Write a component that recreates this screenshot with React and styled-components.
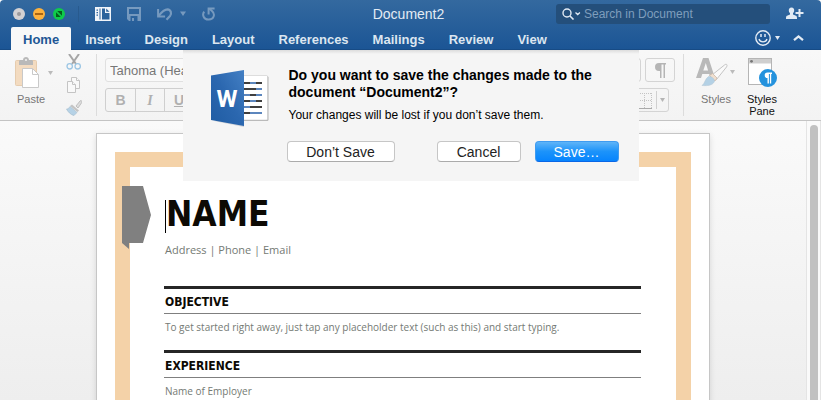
import { useState } from "react";
import styled, { createGlobalStyle, css } from "styled-components";

const tabs = [
  "Home",
  "Insert",
  "Design",
  "Layout",
  "References",
  "Mailings",
  "Review",
  "View",
];

export default function App() {
  const [activeTab, setActiveTab] = useState("Home");
  const [dialogOpen, setDialogOpen] = useState(true);
  const [font, setFont] = useState("Tahoma (Headings)");

  const closeDialog = () => setDialogOpen(false);

  return (
    <Window>
      <GlobalStyle />
      <Header>
        <TitleBar>
          <QuickAccess>
            <Lights>
              <Light $color="#d3d1d3" aria-label="Close">
                <svg width="12" height="12" viewBox="0 0 12 12">
                  <circle cx="6" cy="6" r="2" fill="#9b999b" />
                </svg>
              </Light>
              <Light $color="#fdb13d" aria-label="Minimize">
                <svg width="12" height="12" viewBox="0 0 12 12">
                  <path d="M2 6h8" stroke="#8f4d05" strokeWidth="1.6" />
                </svg>
              </Light>
              <Light $color="#0fcb4b" aria-label="Zoom">
                <svg width="12" height="12" viewBox="0 0 12 12">
                  <path d="M3 4.2v4.8h4.8zM4.2 3h4.8v4.8z" fill="#04601c" />
                </svg>
              </Light>
            </Lights>
            <TitleDivider />
            <BarButton aria-label="Sidebar">
              <SidebarIcon />
            </BarButton>
            <BarButton aria-label="Save" $faded>
              <SaveIcon />
            </BarButton>
            <BarButton aria-label="Undo" $faded>
              <UndoIcon />
            </BarButton>
            <BarButton aria-label="Repeat" $faded>
              <RedoIcon />
            </BarButton>
          </QuickAccess>
          <Title>Document2</Title>
          <TitleTools>
            <Search>
              <SearchIcon />
              <input
                type="text"
                placeholder="Search in Document"
                aria-label="Search in Document"
              />
            </Search>
            <BarButton aria-label="Share">
              <ShareIcon />
            </BarButton>
          </TitleTools>
        </TitleBar>
        <TabBar>
          {tabs.map((tab) => (
            <Tab
              key={tab}
              $active={tab === activeTab}
              onClick={() => setActiveTab(tab)}
            >
              {tab}
            </Tab>
          ))}
          <TabTools>
            <BarButton aria-label="Feedback">
              <SmileyIcon />
            </BarButton>
            <BarButton aria-label="Collapse ribbon">
              <svg width="11" height="8" viewBox="0 0 11 8" fill="none">
                <path d="M1 6.2 5.5 2.4 10 6.2" stroke="#e3ebf4" strokeWidth="2.2" />
              </svg>
            </BarButton>
          </TabTools>
        </TabBar>
      </Header>

      <Ribbon>
        <PasteGroup>
          <BigButton $faded>
            <PasteIcon />
            <PasteLabel>Paste</PasteLabel>
          </BigButton>
          <SmallIcons>
            <IconButton aria-label="Cut">
              <CutIcon />
            </IconButton>
            <IconButton aria-label="Copy">
              <CopyIcon />
            </IconButton>
            <IconButton aria-label="Format painter">
              <BrushIcon />
            </IconButton>
          </SmallIcons>
        </PasteGroup>
        <FontGroup>
          <FontInput
            type="text"
            aria-label="Font"
            value={font}
            onChange={(e) => setFont(e.target.value)}
          />
          <Segments>
            <Segment aria-label="Bold">
              <b>B</b>
            </Segment>
            <Segment aria-label="Italic">
              <i>I</i>
            </Segment>
            <Segment aria-label="Underline">
              <u>U</u>
            </Segment>
          </Segments>
        </FontGroup>
        <ParagraphGroup>
          <ParagraphRow>
            <Tool aria-label="Sort" />
            <Tool aria-label="Show formatting marks">
              <PilcrowIcon />
            </Tool>
          </ParagraphRow>
          <ParagraphRow>
            <Tool aria-label="Borders" $wide>
              <BordersIcon />
            </Tool>
          </ParagraphRow>
        </ParagraphGroup>
        <StylesGroup>
          <BigButton $faded>
            <StylesIcon />
            Styles
          </BigButton>
          <BigButton>
            <StylesPaneIcon />
            Styles
            <br />
            Pane
          </BigButton>
        </StylesGroup>
      </Ribbon>

      <Workspace>
        <Canvas>
          <Page>
            <Frame>
              <Tag>
                <svg width="30" height="64" viewBox="0 0 30 64">
                  <path d="M0 0h21l8 29-8 28H7v6L0 57z" fill="#808080" />
                </svg>
              </Tag>
              <Name>NAME</Name>
              <Contact>Address | Phone | Email</Contact>
              <Section>
                <h2>OBJECTIVE</h2>
                <p>
                  To get started right away, just tap any placeholder text (such
                  as this) and start typing.
                </p>
              </Section>
              <Section>
                <h2>EXPERIENCE</h2>
                <p>Name of Employer</p>
              </Section>
            </Frame>
          </Page>
        </Canvas>
        <ScrollTrack>
          <ScrollThumb />
        </ScrollTrack>
      </Workspace>

      {dialogOpen && (
        <Dialog role="alertdialog" aria-labelledby="save-title">
          <WordIcon />
          <DialogBody>
            <h1 id="save-title">
              Do you want to save the changes made to the document “Document2”?
            </h1>
            <p>Your changes will be lost if you don’t save them.</p>
            <DialogButtons>
              <DialogButton $wide onClick={closeDialog}>
                Don’t Save
              </DialogButton>
              <DialogButton onClick={closeDialog}>Cancel</DialogButton>
              <DialogButton $primary onClick={closeDialog}>
                Save…
              </DialogButton>
            </DialogButtons>
          </DialogBody>
        </Dialog>
      )}
    </Window>
  );
}

// Title bar icons
const SidebarIcon = () => (
  <svg width="16" height="14" viewBox="0 0 16 14">
    <path
      d="M0 0h16v14H0zM4.500 1.500v11H5.500v-11zM7 1.500v11h7.500V6H10V1.500zM11.200 1.500v3.300h3.300zM1.500 2.500v1.200H3V2.500zM1.500 5v1.200H3V5zM1.500 7.500v1.200H3V7.500z"
      fill="#f0f4f9"
      fillRule="evenodd"
    />
  </svg>
);

const SaveIcon = () => (
  <svg width="14" height="14" viewBox="0 0 14 14">
    <path
      d="M0 0h14v14H2l-2-2zM2 2v5h10V2zM3.500 9v5H5v-3h2v3h3.500V9z"
      fill="#fff"
      fillRule="evenodd"
    />
  </svg>
);

const UndoIcon = () => (
  <svg width="29" height="14" viewBox="0 0 29 14" fill="none" stroke="#fff">
    <path d="M1.100 2v7.400h7" strokeWidth="2" />
    <path
      d="M1.500 9C5 4.500 7.500 2.300 10.500 2.300c3.500.2 4.500 4.200 2.500 6.700L9.500 12.800"
      strokeWidth="2.2"
    />
    <path d="M23 4.500h6l-3 4.500z" fill="#fff" stroke="none" />
  </svg>
);

const RedoIcon = () => (
  <svg width="14" height="14" viewBox="0 0 14 14" fill="none" stroke="#fff">
    <path d="M2.200 4.600A5 5 0 0 0 6.500 12.600c5.500.2 7-5.600 3.500-8.600L7.500 1.800" strokeWidth="2" />
    <path d="M6.600 7.500V1.500h6" strokeWidth="2" />
  </svg>
);

const SearchIcon = () => (
  <svg width="19" height="12" viewBox="0 0 19 12" fill="none" stroke="#e3ebf4">
    <circle cx="5" cy="5" r="4" strokeWidth="1.4" />
    <path d="M8 8l3.500 3.500" strokeWidth="1.6" />
    <path d="M13.500 4.500l2.200 2 2.200-2" strokeWidth="1.3" />
  </svg>
);

const ShareIcon = () => (
  <svg width="18" height="13" viewBox="0 0 18 13" fill="#e3ebf4">
    <path d="M5.500.5c2 0 2.800 1.400 2.700 3-.1 1.300-.6 2.100-1.200 2.700v1.300l3 1.200c.8.400 1 1 1 3.300H0c0-2.300.2-2.900 1-3.300l3-1.200V6.200C3.400 5.600 2.900 4.800 2.800 3.500 2.700 1.900 3.500.5 5.500.5z" />
    <path d="M12.500 2h2v3h3v2h-3v3h-2V7h-3V5h3z" />
  </svg>
);

const SmileyIcon = () => (
  <svg width="25" height="16" viewBox="0 0 25 16" fill="none" stroke="#e3ebf4">
    <circle cx="8" cy="8" r="7.2" strokeWidth="1.4" />
    <path d="M6 4v3M10 4v3" strokeWidth="1.5" />
    <path d="M4 9c1 3.700 7 3.700 8 0" strokeWidth="1.3" />
    <path d="M20 6h5l-2.500 4z" fill="#e3ebf4" stroke="none" />
  </svg>
);

// Ribbon icons
const PasteIcon = () => (
  <svg width="40" height="32" viewBox="0 0 40 32">
    <rect x="1.5" y="3.5" width="21" height="25" rx="1" fill="#f3dbc0" stroke="#e6ccae" />
    <path d="M5 8V4.500c0-.8.500-1.500 1.500-1.500H9c0-4 6-4 6 0h2.500c1 0 1.500.7 1.500 1.500V8z" fill="#b9b9b9" />
    <circle cx="12" cy="3" r="1" fill="#f5f5f5" />
    <path d="M8.500 11.500h10l6 6v13h-16z" fill="#fff" stroke="#c9c9c9" />
    <path d="M18.500 11.500v6h6" fill="none" stroke="#c9c9c9" />
    <path d="M34 14h5l-2.500 4z" fill="#bbb" />
  </svg>
);

const CutIcon = () => (
  <svg width="16" height="16" viewBox="0 0 16 16" fill="none">
    <path d="M3 0l7 10M13 0L6 10" stroke="#a6a6a6" strokeWidth="2" />
    <circle cx="3.7" cy="12.3" r="2.7" stroke="#9cc6e4" strokeWidth="1.3" />
    <circle cx="11.7" cy="12.3" r="2.7" stroke="#9cc6e4" strokeWidth="1.3" />
  </svg>
);

const CopyIcon = () => (
  <svg width="16" height="16" viewBox="0 0 16 16" fill="#f9f9f9" stroke="#c4c4c4">
    <path d="M5.500.5h5l3 3v8h-8z" />
    <path d="M10.500.5v3h3" />
    <path d="M1.500 4.500h5l3 3v8h-8z" />
    <path d="M6.500 4.500v3h3" />
  </svg>
);

const BrushIcon = () => (
  <svg width="16" height="16" viewBox="0 0 16 16">
    <path d="M10 6l4-5c1-1 2.500 0 1.800 1.500L12 8z" fill="#ddd" stroke="#b5b5b5" strokeWidth=".8" />
    <path d="M6 4.500l7 6-1.500 1.500-7.500-6z" fill="#c4c4c4" />
    <path d="M4 6.500l7 6L8 15.500C5 15 2 12 .5 9c1.500 0 2.500-.8 3.500-2.500z" fill="#b6d2e6" stroke="#a5bccd" strokeWidth=".6" />
  </svg>
);

const PilcrowIcon = () => (
  <svg width="12" height="15" viewBox="0 0 12 15">
    <path d="M5 0h7v1.500h-1V15H9.500V1.500H7.500V15H6V8H5a4 4 0 0 1 0-8z" fill="#b5b5b5" />
  </svg>
);

const BordersIcon = () => (
  <svg width="30" height="22" viewBox="0 0 30 22" fill="none">
    <path d="M0 4.500h14M0 11.500h14M6.500 4v15M13.500 4v15" stroke="#c4c4c4" strokeDasharray="1 1" />
    <path d="M0 19.500h14" stroke="#aaa" />
    <path d="M18.500 2v18" stroke="#d0d0d0" />
    <path d="M22 9h5l-2.500 4z" fill="#b5b5b5" />
  </svg>
);

const StylesIcon = () => (
  <svg width="40" height="32" viewBox="0 0 40 32">
    <path d="M7 1h5.500L19 21h-4.500l-1.300-4H6.300L5 21H0zM9.800 6L7.300 13.500h4.800z" fill="#b9b9b9" />
    <path d="M16 18L28.500 8c2-1.500 3.300-.3 2 2L20.500 22.500z" fill="#fafafa" stroke="#c4c4c4" />
    <path d="M13.500 18.500l3-2 4.500 4.500-2 3z" fill="#f0dfcf" stroke="#cbb9a8" strokeWidth=".8" />
    <path d="M12.500 19.500c3-.5 6.500 2.500 6 5-2 4-7 4.500-12.500 4 3-2 3-7 6.500-9z" fill="#b4d1e5" stroke="#b0c4d2" strokeWidth=".5" />
    <path d="M34 13h5l-2.500 4z" fill="#bbb" />
  </svg>
);

const StylesPaneIcon = () => (
  <svg width="32" height="32" viewBox="0 0 32 32">
    <rect x="2.5" y="1.5" width="23" height="26" fill="#fff" stroke="#b5b5b5" />
    <path d="M3 2h22v4.500H3z" fill="#cfcfcf" />
    <circle cx="5.5" cy="4.3" r="1.4" fill="#777" />
    <circle cx="22" cy="21" r="9" fill="#2492dd" />
    <path d="M21.500 15.500H26V17h-.8v9.500h-1.300V17h-1v9.500h-1.400v-5.400a2.800 2.800 0 0 1 0-5.600z" fill="#fff" />
  </svg>
);

const WordIcon = () => (
  <WordLogo width="58" height="60" viewBox="0 0 58 60">
    <defs>
      <linearGradient id="cover" x1="0" y1="1" x2="1" y2="0">
        <stop offset="0" stopColor="#1f5ca3" />
        <stop offset=".5" stopColor="#2b67af" />
        <stop offset="1" stopColor="#4480c4" />
      </linearGradient>
    </defs>
    <path d="M3 53l30 6v-5z" fill="#b9bcc4" opacity=".6" />
    <rect x="30.5" y="8" width="27" height="45" rx="1.5" fill="#b4b4b4" />
    <rect x="30" y="7.5" width="26.5" height="44.5" rx="1" fill="#fff" stroke="#c9c9c9" strokeWidth=".6" />
    <g strokeWidth="1.8">
      <path d="M33 15h6M45 15h6M33 21h12M39 27h6M33 33h6M45 33h6M39 39h12M33 45h6" stroke="#3f3f3f" />
      <path d="M39 15h6M45 21h6M33 27h6M45 27h6M39 33h6M33 39h6M39 45h12" stroke="#5c86bd" />
    </g>
    <path d="M0 7.500L33 2v56L0 52z" fill="url(#cover)" />
    <text
      x="16"
      y="39"
      textAnchor="middle"
      fontFamily="Roboto, sans-serif"
      fontSize="24"
      fontWeight="700"
      fill="#fff"
    >
      W
    </text>
  </WordLogo>
);

const GlobalStyle = createGlobalStyle`
  * {
    box-sizing: border-box;
    margin: 0;
    padding: 0;
  }
  body {
    background-color: #fff;
    overflow: hidden;
    font-family: "Liberation Sans", Arial, sans-serif;
  }
  button, input {
    font-family: inherit;
    border: none;
    background: none;
    outline: none;
  }
  svg {
    display: block;
    flex-shrink: 0;
  }
`;

const Window = styled.div`
  position: relative;
  display: flex;
  flex-direction: column;
  height: 100vh;
  overflow: hidden;
  border-radius: 4px 4px 0 0;
`;

const Header = styled.header`
  background: linear-gradient(#34699f, #1b5595);
  border-bottom: 1px solid #174b85;
`;

const TitleBar = styled.div`
  display: grid;
  grid-template-columns: 1fr auto 1fr;
  align-items: center;
  height: 27px;
  padding: 0 17px 0 13px;
`;

const QuickAccess = styled.div`
  display: flex;
  align-items: center;
  gap: 16px;
`;

const Lights = styled.div`
  display: flex;
  gap: 8px;
`;

const Light = styled.button`
  width: 12px;
  height: 12px;
  border-radius: 50%;
  background-color: ${({ $color }) => $color};
`;

const TitleDivider = styled.span`
  width: 1px;
  height: 16px;
  margin-left: -3px;
  background-color: #285a8e;
`;

const BarButton = styled.button`
  display: flex;
  opacity: ${({ $faded }) => ($faded ? 0.35 : 1)};
`;

const Title = styled.div`
  font-size: 14px;
  line-height: 16px;
  color: #e3ebf4;
`;

const TitleTools = styled.div`
  display: flex;
  justify-content: flex-end;
  align-items: center;
  gap: 16px;
`;

const Search = styled.label`
  display: flex;
  align-items: center;
  gap: 3px;
  width: 214px;
  height: 20px;
  padding: 0 6px;
  border-radius: 3px;
  background-color: #244f7b;
  input {
    flex: 1;
    min-width: 0;
    font-size: 12px;
    color: #fff;
    &::placeholder {
      color: #7f9ebd;
    }
  }
`;

const TabBar = styled.nav`
  display: flex;
  height: 22px;
  padding: 0 17px 0 11px;
`;

const Tab = styled.button`
  height: 23px;
  padding: 2px 12px 0;
  border-radius: 2px 2px 0 0;
  font-size: 13px;
  font-weight: bold;
  color: #dce6f0;
  ${({ $active }) =>
    $active &&
    css`
      margin-right: 2px;
      background-color: #f8f8f8;
      color: #1f5795;
    `}
`;

const TabTools = styled.div`
  display: flex;
  align-items: center;
  gap: 13px;
  margin-left: auto;
`;

const Ribbon = styled.div`
  display: flex;
  height: 71px;
  padding: 4px 0;
  background: linear-gradient(#f8f8f8, #f3f3f3);
  border-bottom: 1px solid #c4c4c4;
`;

const PasteGroup = styled.div`
  display: flex;
  gap: 12px;
  padding: 0 14px;
  border-right: 1px solid #dcdcdc;
`;

const BigButton = styled.button`
  display: flex;
  flex-direction: column;
  align-items: center;
  padding-top: 3px;
  font-size: 11px;
  line-height: 12px;
  color: ${({ $faded }) => ($faded ? "#777" : "#111")};
  svg {
    margin-bottom: 4px;
  }
`;

// Centred under the clipboard, not under its drop-down arrow
const PasteLabel = styled.span`
  padding-right: 6px;
`;

const SmallIcons = styled.div`
  display: flex;
  flex-direction: column;
  gap: 7px;
`;

const IconButton = styled.button`
  display: flex;
`;

const FontGroup = styled.div`
  flex: 1;
  display: flex;
  flex-direction: column;
  align-items: flex-start;
  gap: 6px;
  padding: 4px 8px;
`;

const FontInput = styled.input`
  width: 150px;
  height: 24px;
  padding: 0 4px;
  border: 1px solid #e0e0e0;
  border-radius: 3px;
  background-color: #f9f9f9;
  font-size: 13px;
  color: #777;
`;

const Segments = styled.div`
  display: flex;
  border: 1px solid #cfcfcf;
  border-radius: 3px;
`;

const Segment = styled.button`
  width: 29px;
  height: 22px;
  font-size: 14px;
  font-weight: bold;
  color: #b0b0b0;
  i {
    font-family: "Liberation Serif", serif;
  }
  & + & {
    border-left: 1px solid #cfcfcf;
  }
`;

const ParagraphGroup = styled.div`
  display: flex;
  flex-direction: column;
  gap: 6px;
  padding: 4px 8px;
  border-right: 1px solid #dcdcdc;
`;

const ParagraphRow = styled.div`
  display: flex;
  gap: 4px;
`;

const Tool = styled.button`
  display: flex;
  align-items: center;
  justify-content: ${({ $wide }) => ($wide ? "flex-end" : "center")};
  width: ${({ $wide }) => ($wide ? 58 : 30)}px;
  height: 24px;
  border: 1px solid #d4d4d4;
  border-radius: 3px;
`;

const StylesGroup = styled.div`
  display: flex;
  gap: 10px;
  padding: 0 43px 0 12px;
`;

const Workspace = styled.main`
  flex: 1;
  min-height: 0;
  display: flex;
  background: linear-gradient(#fafafa, #eee);
`;

const Canvas = styled.div`
  flex: 1;
  padding: 12px 0 0;
  overflow: hidden;
`;

const Page = styled.article`
  max-width: 614px;
  margin: 0 auto;
  padding: 18px;
  border: 1px solid #c6c6c6;
  background-color: #fff;
  box-shadow: 0 2px 6px rgba(0, 0, 0, 0.12);
`;

const Frame = styled.div`
  position: relative;
  min-height: 640px;
  padding: 26px 35px 0 34px;
  border: 15px solid #f4d2a8;
  font-family: "DejaVu Sans Condensed", "Noto Sans", sans-serif;
  color: #747a74;
`;

// Grey tag that hangs over the frame's left edge
const Tag = styled.div`
  position: absolute;
  left: -8px;
  top: 19px;
`;

const Name = styled.h1`
  margin: 7px 0 9px 1px;
  padding-bottom: 5px;
  border-left: 1px solid #000;
  font-size: 35px;
  line-height: 28px;
  color: #0d0a04;
`;

const Contact = styled.p`
  margin: 0 0 28px 1px;
  font-family: "Open Sans", "Noto Sans", sans-serif;
  font-size: 11px;
  line-height: 16px;
`;

const Section = styled.section`
  border-top: 3px solid #262626;
  h2 {
    padding: 2px 0 0 1px;
    border-bottom: 1px solid #7f7f7f;
    font-size: 12px;
    line-height: 22px;
    color: #0d0a04;
  }
  p {
    padding: 6px 0 16px 1px;
    font-family: "Open Sans", "Noto Sans", sans-serif;
    font-size: 10px;
    line-height: 14px;
  }
`;

const ScrollTrack = styled.div`
  width: 15px;
  padding: 4px 3px 0;
  border-left: 1px solid #e4e4e4;
  border-right: 1px solid #e4e4e4;
  background-color: #fafafa;
`;

const ScrollThumb = styled.div`
  width: 8px;
  height: 100%;
  border-radius: 4px 4px 0 0;
  background-color: #c1c1c1;
`;

const Dialog = styled.div`
  position: absolute;
  top: 50px;
  left: 0;
  right: 0;
  display: flex;
  gap: 20px;
  width: 456px;
  margin: 0 auto;
  padding: 17px 20px 19px 28px;
  background: linear-gradient(#dcdcdc, #f5f5f5 4px);
`;

const WordLogo = styled.svg`
  margin-top: 1px;
`;

const DialogBody = styled.div`
  flex: 1;
  h1 {
    font-size: 14px;
    line-height: 17px;
    color: #000;
  }
  p {
    margin: 7px 0 19px;
    font-size: 12px;
    line-height: 14px;
    color: #000;
  }
`;

const DialogButtons = styled.div`
  display: flex;
  gap: 14px;
  margin-left: -2px;
`;

const DialogButton = styled.button`
  width: ${({ $wide }) => ($wide ? 108 : 84)}px;
  height: 21px;
  margin-right: ${({ $wide }) => ($wide ? "auto" : 0)};
  border: 1px solid #c6c6c6;
  border-bottom-color: #ababab;
  border-radius: 4px;
  background-color: #fff;
  font-size: 14px;
  line-height: 18px;
  color: #222;
  ${({ $primary }) =>
    $primary &&
    css`
      border-color: #3f9bf0;
      border-bottom-color: #0a67e6;
      background: linear-gradient(#5fb4f8, #1c93fa 50%, #0784fd);
      color: #fff;
    `}
`;
